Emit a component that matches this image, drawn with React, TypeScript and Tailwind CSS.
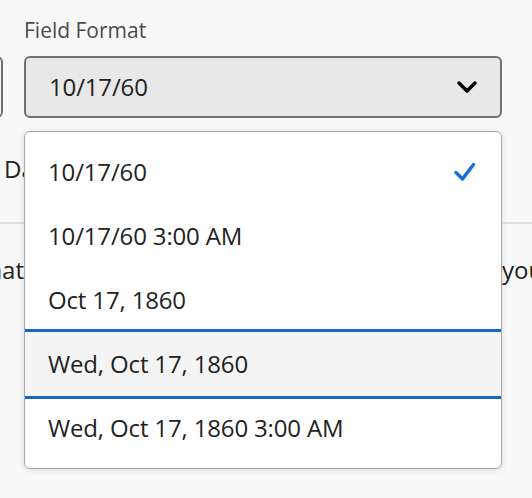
const options = [
  '10/17/60',
  '10/17/60 3:00 AM',
  'Oct 17, 1860',
  'Wed, Oct 17, 1860',
  'Wed, Oct 17, 1860 3:00 AM',
]

export default function App() {
  const selected = 0
  const focused = 3

  return (
    <div className="relative w-[532px] h-[498px] overflow-hidden bg-[#f8f8f8] text-[#222] font-['Open_Sans','Noto_Sans',sans-serif]">
      {/* form behind the popover */}
      <div className="flex gap-[21px] pt-[15px]">
        <div className="-ml-[197px] w-[200px] shrink-0 flex flex-col">
          <label className="h-[41px] text-[21px] leading-[30px] text-[#4b4b4b] whitespace-nowrap">Date</label>
          <div className="h-[62px] rounded-[6px] border-2 border-[#707070] bg-[#f8f8f8]" />
        </div>
        <div className="w-[478px] shrink-0 flex flex-col">
          <label className="h-[41px] text-[21px] leading-[30px] text-[#4b4b4b]">Field Format</label>
          <button className="h-[62px] flex items-center justify-between rounded-[6px] border-2 border-[#707070] bg-[#e8e8e8] pl-[23px] pr-[21px] text-[24px] tracking-[-0.15px]">
            <span>10/17/60</span>
            <svg width="24" height="16" viewBox="0 0 24 16" fill="none" stroke="#000" strokeWidth="3.4" strokeLinecap="round" strokeLinejoin="round">
              <path d="M4 4 L12 12 L20 4" />
            </svg>
          </button>
        </div>
      </div>

      <div className="mt-[34px] pl-[4px] h-[34px] text-[24px] leading-[34px] whitespace-nowrap">Date only</div>

      <div className="mt-[36px] h-[2px] bg-[#e1e1e1]" />

      <div className="mt-[29px] flex text-[24px] leading-[34px] whitespace-nowrap">
        <span className="w-[24px] shrink-0 flex justify-end">Choose a date format</span>
        <span className="w-[478px] shrink-0 overflow-hidden">for how the field appears when</span>
        <span>you print</span>
      </div>

      {/* open listbox */}
      <div className="absolute left-[24px] top-[131px] w-[478px] rounded-[6px] border border-[#a8a8a8] bg-white py-[8px] shadow-[0_1px_6px_rgba(0,0,0,0.12)]">
        {options.map((o, i) => (
          <div
            key={o}
            className={
              i === focused
                ? 'h-[64px] flex items-center justify-between pl-[23px] pr-[25px] text-[24px] tracking-[-0.15px] bg-[#f4f4f4] shadow-[0_-3px_0_#1766c8,0_3px_0_#1766c8]'
                : 'h-[64px] flex items-center justify-between pl-[23px] pr-[25px] text-[24px] tracking-[-0.15px]'
            }
          >
            <span>{o}</span>
            {i === selected && (
              <svg width="22" height="20" viewBox="0 0 22 20" fill="none" stroke="#1570d8" strokeWidth="3.4" strokeLinecap="round" strokeLinejoin="round">
                <path d="M2 10.5 L8.5 17 L19.5 2.5" />
              </svg>
            )}
          </div>
        ))}
      </div>
    </div>
  )
}
